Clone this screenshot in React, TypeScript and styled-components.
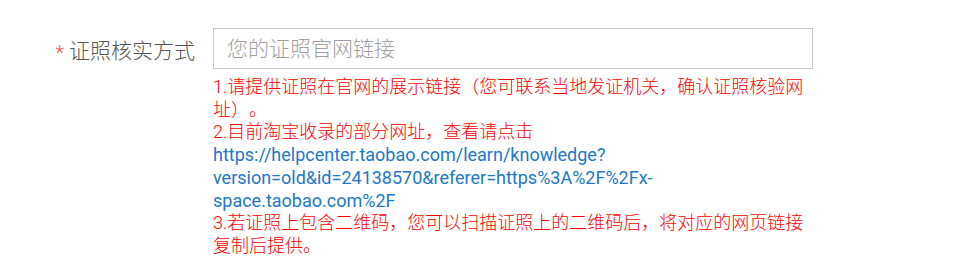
import styled, { createGlobalStyle } from "styled-components";

const GlobalStyle = createGlobalStyle`
  body {
    margin: 0;
    background: #fff;
    font-family: Roboto, "Noto Sans CJK SC", sans-serif;
    text-spacing-trim: space-all;
  }
`;

const FormRow = styled.div`
  display: grid;
  grid-template-columns: 195px 600px;
  column-gap: 18px;
  padding-top: 28px;
`;

const Label = styled.label`
  height: 41px;
  display: flex;
  align-items: center;
  justify-content: flex-end;
  font-size: 21px;
  font-weight: 300;
  color: #555;
`;

const Required = styled.span`
  display: inline-block;
  color: #f5533d;
  font-size: 20px;
  line-height: 1;
  padding-top: 8px;
  margin-right: 5px;
`;

const Field = styled.div`
  display: flex;
  flex-direction: column;
`;

const Input = styled.input`
  box-sizing: border-box;
  width: 600px;
  height: 41px;
  border: 1px solid #c5c7d0;
  padding: 0 13px;
  font-family: Roboto, "Noto Sans CJK SC", sans-serif;
  font-size: 21px;
  font-weight: 300;
  color: #333;
  outline: none;
  &::placeholder {
    color: #a0a0a0;
  }
`;

const Help = styled.div`
  margin-top: 7px;
  font-size: 18px;
  line-height: 22.7px;
  color: #ff0000;
`;

const Tip = styled.div`
  font-weight: 300;
`;

const TipLink = styled.a`
  display: block;
  font-weight: 400;
  color: #2178c8;
  text-decoration: none;
`;

export default function App() {
  return (
    <>
      <GlobalStyle />
      <FormRow>
        <Label>
          <Required>*</Required>
          证照核实方式
        </Label>
        <Field>
          <Input placeholder="您的证照官网链接" />
          <Help>
            <Tip>1.请提供证照在官网的展示链接（您可联系当地发证机关，确认证照核验网址）。</Tip>
            <Tip>
              2.目前淘宝收录的部分网址，查看请点击
              <TipLink href="#">
                https://helpcenter.taobao.com/learn/knowledge?version=old&amp;id=24138570&amp;referer=https%3A%2F%2Fx-space.taobao.com%2F
              </TipLink>
            </Tip>
            <Tip>3.若证照上包含二维码，您可以扫描证照上的二维码后，将对应的网页链接复制后提供。</Tip>
          </Help>
        </Field>
      </FormRow>
    </>
  );
}
